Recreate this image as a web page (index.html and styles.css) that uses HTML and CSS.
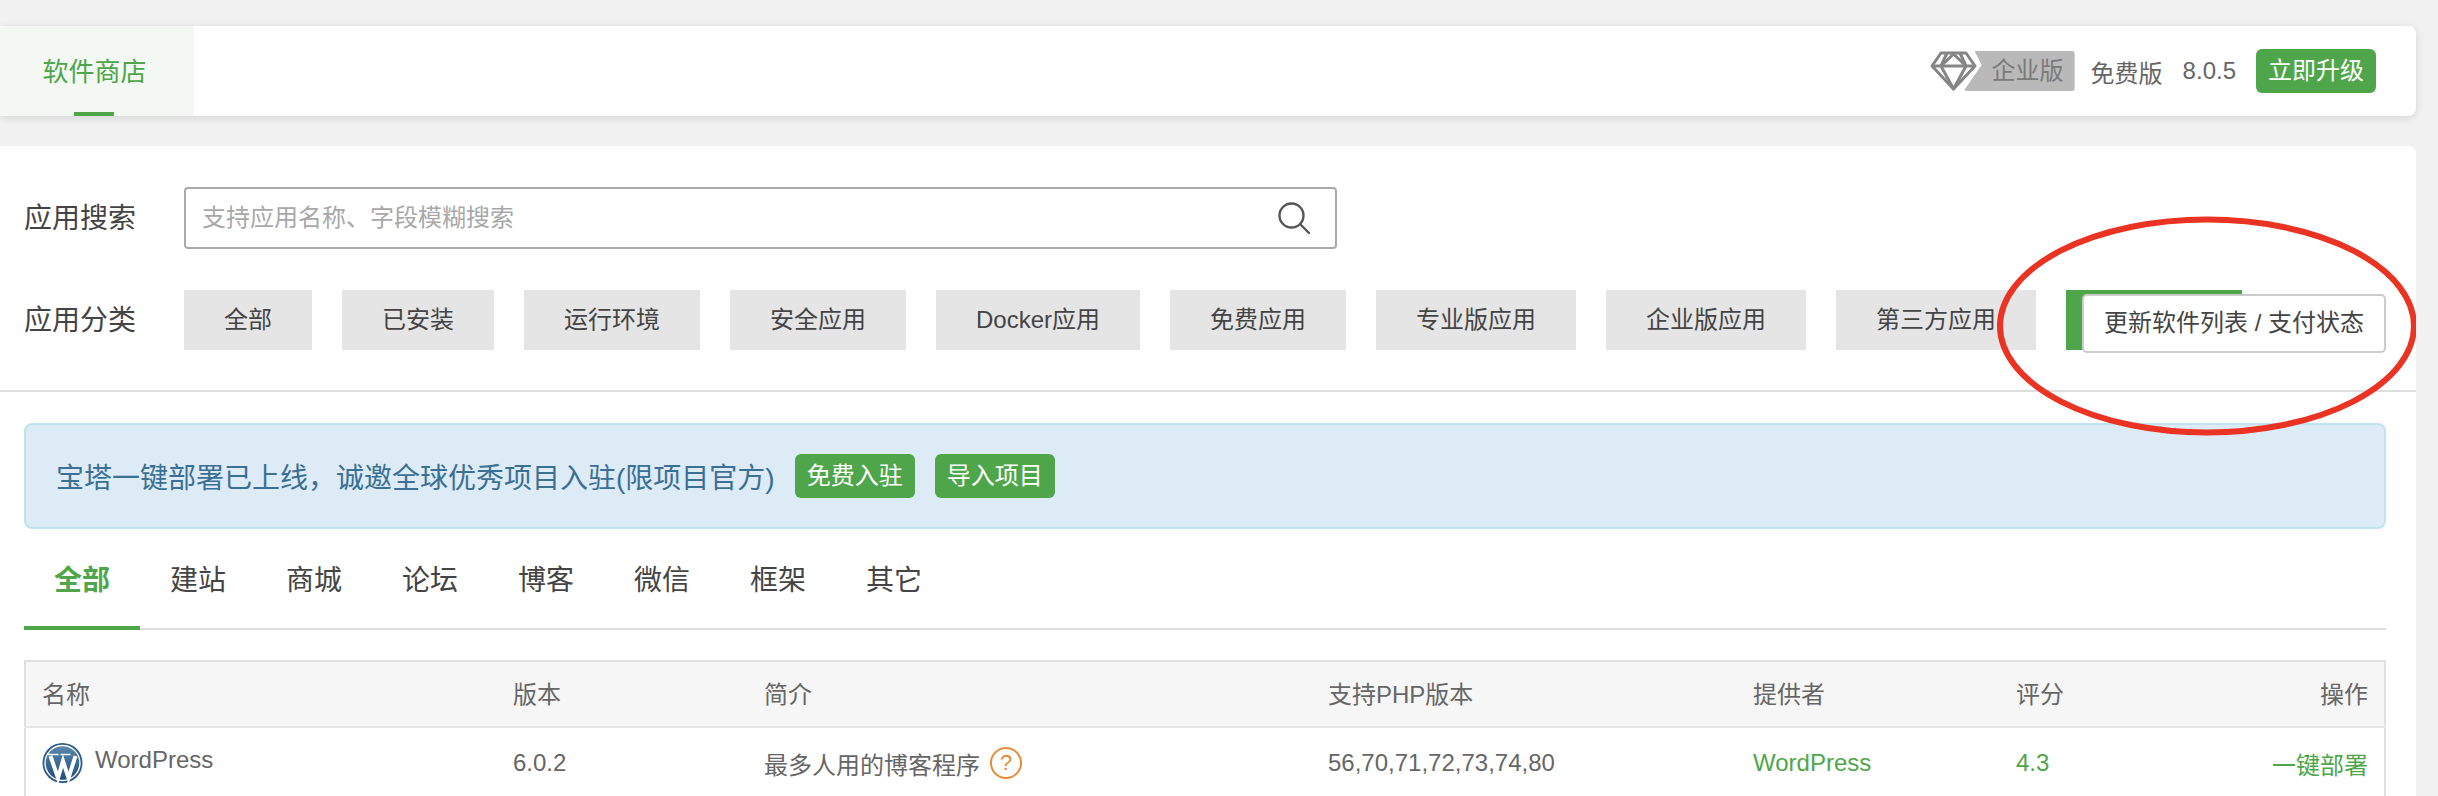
FILE: index.html
```html
<!DOCTYPE html>
<html lang="zh-CN">
<head>
    <meta charset="UTF-8">
    <meta name="viewport" content="width=device-width, initial-scale=1.0">
    <title>软件商店</title>
    <link rel="stylesheet" href="styles.css">
</head>
<body>
    <header class="top-bar">
        <a class="top-tab">软件商店</a>
        <div class="top-info">
            <div class="edition">
                <svg class="diamond" viewBox="0 0 47 40" fill="none" stroke="#858585" stroke-width="3" stroke-linejoin="round">
                    <path d="M11 2H36L45 15 23.500 38 2 15Z"/>
                    <path d="M2 15H45"/>
                    <path d="M17 2 11 15 23.500 38 36 15 30 2"/>
                    <path d="M11 15 23.500 3 36 15"/>
                </svg>
                <span class="edition-name">企业版</span>
            </div>
            <span class="plan">免费版</span>
            <span class="plan">8.0.5</span>
            <a class="btn-green">立即升级</a>
        </div>
    </header>

    <main class="store">
        <section class="filters">
            <div class="filter-row">
                <label class="filter-label label-search">应用搜索</label>
                <div class="search-box">
                    <input class="search-input" type="text" placeholder="支持应用名称、字段模糊搜索">
                    <svg class="search-icon" viewBox="0 0 34 34" fill="none" stroke="#555" stroke-width="2.400" stroke-linecap="round">
                        <circle cx="14.500" cy="14.500" r="12"/>
                        <path d="M23.500 23.500 32 32"/>
                    </svg>
                </div>
            </div>
            <div class="filter-row">
                <label class="filter-label">应用分类</label>
                <div class="cats">
                    <a class="cat">全部</a>
                    <a class="cat">已安装</a>
                    <a class="cat">运行环境</a>
                    <a class="cat">安全应用</a>
                    <a class="cat">Docker应用</a>
                    <a class="cat">免费应用</a>
                    <a class="cat">专业版应用</a>
                    <a class="cat">企业版应用</a>
                    <a class="cat">第三方应用</a>
                    <div class="cat-update">
                        <span class="tooltip">更新软件列表 / 支付状态</span>
                    </div>
                </div>
            </div>
        </section>

        <section class="content">
            <div class="notice">
                <span>宝塔一键部署已上线，诚邀全球优秀项目入驻(限项目官方)</span>
                <a class="btn-green">免费入驻</a>
                <a class="btn-green">导入项目</a>
            </div>

            <nav class="types">
                <a class="type active">全部</a>
                <a class="type">建站</a>
                <a class="type">商城</a>
                <a class="type">论坛</a>
                <a class="type">博客</a>
                <a class="type">微信</a>
                <a class="type">框架</a>
                <a class="type">其它</a>
            </nav>

            <table class="soft-table">
                <colgroup>
                    <col class="col-name"><col class="col-ver"><col class="col-desc">
                    <col class="col-php"><col class="col-by"><col class="col-score"><col class="col-op">
                </colgroup>
                <thead>
                    <tr>
                        <th>名称</th><th>版本</th><th>简介</th><th>支持PHP版本</th><th>提供者</th><th>评分</th><th class="right">操作</th>
                    </tr>
                </thead>
                <tbody>
                    <tr>
                        <td>
                            <div class="app-name">
                                <svg class="wp-logo" viewBox="0 0 40 40">
                                    <defs>
                                        <linearGradient id="wpBlue" x1="0" y1="0" x2="0" y2="1">
                                            <stop offset="0" stop-color="#5b88ad"/>
                                            <stop offset="1" stop-color="#1d4d7c"/>
                                        </linearGradient>
                                    </defs>
                                    <circle cx="20" cy="20" r="20" fill="#2a5a86"/>
                                    <circle cx="20" cy="20" r="17.500" fill="url(#wpBlue)" stroke="#fff" stroke-width="1.400"/>
                                    <path d="M8 13 15.500 35 20.500 18 26 35 33 13" fill="none" stroke="#fff" stroke-width="4"/>
                                    <path d="M5 11.500H16M18 11.500H28" stroke="#fff" stroke-width="1.600"/>
                                </svg>
                                <span class="app-title">WordPress</span>
                            </div>
                        </td>
                        <td>6.0.2</td>
                        <td>
                            <div class="app-desc">最多人用的博客程序<span class="help">?</span></div>
                        </td>
                        <td>56,70,71,72,73,74,80</td>
                        <td class="green">WordPress</td>
                        <td class="green">4.3</td>
                        <td class="green right">一键部署</td>
                    </tr>
                </tbody>
            </table>
        </section>

        <svg class="mark" viewBox="0 0 426 226" fill="none">
            <ellipse cx="213" cy="112" rx="207" ry="106.500" stroke="#ea3323" stroke-width="6"/>
        </svg>
    </main>
</body>
</html>
```

FILE: styles.css
```css
* {
    box-sizing: border-box;
}
html, body {
    height: 100%;
}
body {
    display: flex;
    flex-direction: column;
    margin: 0;
    padding: 26px 22px 0 0;
    overflow: hidden;
    background-color: #f1f1f1;
    font-family: "Liberation Sans", "Noto Sans CJK SC", sans-serif;
    font-size: 24px;
    color: #666;
}
a {
    text-decoration: none;
}
.top-bar {
    flex: none;
    display: flex;
    justify-content: space-between;
    align-items: center;
    height: 90px;
    background: #fff;
    border-radius: 0 8px 8px 0;
    box-shadow: 0 2px 8px rgba(0, 0, 0, 0.12);
}
.top-tab {
    position: relative;
    display: flex;
    align-items: center;
    justify-content: center;
    width: 194px;
    height: 100%;
    padding: 0 5px 3px 0;
    background-color: #f3f8f3;
    color: #4fa64a;
    font-size: 26px;
}
.top-tab::after {
    content: "";
    position: absolute;
    left: 74px;
    bottom: 0;
    width: 40px;
    height: 4px;
    background-color: #4fa64a;
}
.top-info {
    display: flex;
    align-items: center;
    gap: 20px;
    padding-right: 40px;
}
.edition {
    display: flex;
    align-items: center;
    margin-right: -4px;
}
.diamond {
    position: relative;
    z-index: 1;
    width: 47px;
    height: 40px;
}
.edition-name {
    margin-left: -13px;
    padding-left: 28px;
    width: 111px;
    height: 40px;
    line-height: 40px;
    background-color: #b9b9b9;
    color: #7b7b7b;
    border-radius: 3px;
    clip-path: polygon(11px 0, 100% 0, 100% 100%, 0 100%, 18px 35%);
}
.btn-green {
    display: inline-block;
    height: 44px;
    line-height: 44px;
    padding: 0 12px;
    background-color: #4fa64a;
    color: #fff;
    border-radius: 6px;
    font-size: 24px;
}

.store {
    position: relative;
    flex: 1;
    min-height: 0;
    overflow: hidden;
    margin-top: 30px;
    background: #fff;
    border-radius: 0 8px 0 0;
}
.filters {
    display: flex;
    flex-direction: column;
    gap: 41px;
    padding: 41px 30px 40px 24px;
    border-bottom: 2px solid #ddd;
}
.filter-row {
    display: flex;
    align-items: center;
}
.filter-label {
    width: 160px;
    padding-bottom: 4px;
    font-size: 28px;
    color: #444;
}
.label-search {
    padding-bottom: 5px;
}
.search-box {
    display: flex;
    align-items: center;
    width: 1153px;
    height: 62px;
    padding-right: 24px;
    border: 2px solid #aaa;
    border-radius: 4px;
}
.search-input {
    flex: 1;
    height: 100%;
    padding: 0 16px;
    border: 0;
    outline: 0;
    background: none;
    font: inherit;
    color: #666;
}
.search-input::placeholder {
    color: #a8a8a8;
}
.search-icon {
    width: 34px;
    height: 34px;
}
.cats {
    display: flex;
    gap: 30px;
}
.cat {
    height: 60px;
    line-height: 60px;
    padding: 0 40px;
    background-color: #e5e5e5;
    color: #444;
}
.cat-update {
    position: relative;
    width: 176px;
    height: 60px;
    background-color: #4fa64a;
}
.tooltip {
    position: absolute;
    top: 4px;
    left: 16px;
    width: 304px;
    height: 59px;
    line-height: 54px;
    text-align: center;
    white-space: nowrap;
    background: #fff;
    color: #444;
    border: 2px solid #ccc;
    border-radius: 5px;
}

.content {
    padding: 31px 30px 0 24px;
}
.notice {
    display: flex;
    align-items: center;
    gap: 20px;
    height: 106px;
    padding-left: 30px;
    background-color: #dcebf6;
    border: 2px solid #bfe4ef;
    border-radius: 8px;
    color: #3b6f94;
    font-size: 28px;
}
.types {
    display: flex;
    height: 101px;
    border-bottom: 2px solid #ddd;
}
.type {
    height: 101px;
    line-height: 103px;
    padding: 0 30px;
    font-size: 28px;
    color: #444;
}
.type.active {
    color: #4fa64a;
    font-weight: bold;
    border-bottom: 4px solid #4fa64a;
}
.soft-table {
    width: 100%;
    margin-top: 30px;
    table-layout: fixed;
    border-collapse: collapse;
    border: 2px solid #e0e0e0;
}
.col-name { width: 472px; }
.col-ver { width: 251px; }
.col-desc { width: 564px; }
.col-php { width: 425px; }
.col-by { width: 263px; }
.col-score { width: 180px; }
.soft-table th {
    height: 66px;
    padding: 0 16px 4px;
    background-color: #f6f6f6;
    border-bottom: 2px solid #e6e6e6;
    font-weight: normal;
    text-align: left;
    color: #666;
}
.soft-table td {
    height: 72px;
    padding: 0 16px;
    color: #666;
}
.soft-table .right {
    text-align: right;
}
.soft-table .green {
    color: #4fa64a;
}
.app-name {
    display: flex;
    align-items: center;
    gap: 12px;
}
.wp-logo {
    width: 41px;
    height: 40px;
}
.app-title {
    padding-bottom: 6px;
}
.app-desc {
    display: flex;
    align-items: center;
    gap: 10px;
}
.help {
    width: 32px;
    height: 32px;
    line-height: 28px;
    text-align: center;
    border: 2px solid #e98a36;
    border-radius: 50%;
    color: #e98a36;
    font-size: 22px;
}
.mark {
    position: absolute;
    left: 1994px;
    top: 68px;
    width: 426px;
    height: 226px;
}
```
